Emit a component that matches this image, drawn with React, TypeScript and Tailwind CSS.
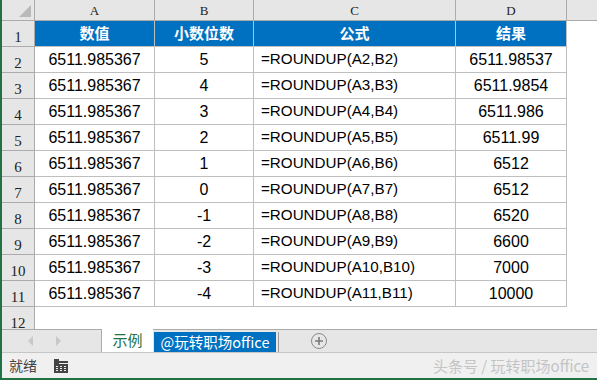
import React from "react";

const rows: [string, string, string, string][] = [
  ["6511.985367", "5", "=ROUNDUP(A2,B2)", "6511.98537"],
  ["6511.985367", "4", "=ROUNDUP(A3,B3)", "6511.9854"],
  ["6511.985367", "3", "=ROUNDUP(A4,B4)", "6511.986"],
  ["6511.985367", "2", "=ROUNDUP(A5,B5)", "6511.99"],
  ["6511.985367", "1", "=ROUNDUP(A6,B6)", "6512"],
  ["6511.985367", "0", "=ROUNDUP(A7,B7)", "6512"],
  ["6511.985367", "-1", "=ROUNDUP(A8,B8)", "6520"],
  ["6511.985367", "-2", "=ROUNDUP(A9,B9)", "6600"],
  ["6511.985367", "-3", "=ROUNDUP(A10,B10)", "7000"],
  ["6511.985367", "-4", "=ROUNDUP(A11,B11)", "10000"],
];

const serif = { fontFamily: '"Liberation Serif", "Noto Sans CJK SC", serif' };
const sans = { fontFamily: '"Liberation Sans", "Noto Sans CJK SC", sans-serif' };
const cjk = { fontFamily: '"Noto Sans CJK SC", "Liberation Sans", sans-serif' };

function RowHead({ n }: { n: number }) {
  return (
    <div
      className="w-[33px] h-full bg-[#e6e6e6] border-r border-b border-[#ababab] flex items-end justify-center pb-[1px] text-[15px] text-[#222] leading-none"
      style={serif}
    >
      {n}
    </div>
  );
}

export default function App() {
  return (
    <div className="w-[597px] h-[380px] bg-white flex flex-col overflow-hidden border-l-2 border-b-2 border-[#217346]">
      <div className="h-[329px] overflow-hidden flex flex-col">
        {/* column headers */}
        <div className="flex h-[21px] shrink-0 bg-[#e6e6e6] text-[13px] text-[#222]" style={serif}>
          <div className="w-[33px] h-full border-r border-b border-[#ababab] relative">
            <div className="absolute right-[3px] bottom-[3px] w-0 h-0 border-l-[12px] border-l-transparent border-b-[12px] border-b-[#b9b9b9]" />
          </div>
          <div className="w-[120px] h-full border-r border-b border-[#ababab] flex items-center justify-center pt-[2px]">A</div>
          <div className="w-[99px] h-full border-r border-b border-[#ababab] flex items-center justify-center pt-[2px]">B</div>
          <div className="w-[202px] h-full border-r border-b border-[#ababab] flex items-center justify-center pt-[2px]">C</div>
          <div className="w-[111px] h-full border-r border-b border-[#ababab] flex items-center justify-center pt-[2px]">D</div>
          <div className="flex-1 h-full border-b border-[#ababab]" />
        </div>
        {/* header row */}
        <div className="flex h-[26px] shrink-0">
          <RowHead n={1} />
          {[
            ["w-[120px]", "数值"],
            ["w-[99px]", "小数位数"],
            ["w-[202px]", "公式"],
            ["w-[111px]", "结果"],
          ].map(([w, t]) => (
            <div
              key={t}
              className={`${w} h-full bg-[#0070c0] border-r border-b border-[#bfbfbf] flex items-center justify-center text-white font-bold text-[15px]`}
              style={cjk}
            >
              {t}
            </div>
          ))}
          <div className="flex-1" />
        </div>
        {rows.map((r, i) => (
          <div key={i} className="flex h-[26px] shrink-0 text-[16px] text-black" style={sans}>
            <RowHead n={i + 2} />
            <div className="w-[120px] h-full border-r border-b border-[#bfbfbf] flex items-center justify-center">{r[0]}</div>
            <div className="w-[99px] h-full border-r border-b border-[#bfbfbf] flex items-center justify-center">{r[1]}</div>
            <div className="w-[202px] h-full border-r border-b border-[#bfbfbf] flex items-center pl-[7px] text-[15.2px]">{r[2]}</div>
            <div className="w-[111px] h-full border-r border-b border-[#bfbfbf] flex items-center justify-center">{r[3]}</div>
            <div className="flex-1" />
          </div>
        ))}
        <div className="flex h-[26px] shrink-0">
          <RowHead n={12} />
          <div className="flex-1" />
        </div>
      </div>
      {/* tab bar */}
      <div className="h-[23px] shrink-0 flex bg-[#e6e6e6] border-t border-[#ababab] relative">
        <div className="w-[99px] h-full flex items-center">
          <div className="ml-[26px] w-0 h-0 border-y-[5px] border-y-transparent border-r-[5px] border-r-[#c8c8c8]" />
          <div className="ml-[23px] w-0 h-0 border-y-[5px] border-y-transparent border-l-[5px] border-l-[#c8c8c8]" />
        </div>
        <div className="w-[52px] h-[23px] -mt-[1px] bg-white border-l border-[#ababab] flex flex-col">
          <div className="flex-1 flex items-center justify-center text-[15px] text-[#217346]" style={cjk}>示例</div>
          <div className="h-[2px] bg-[#217346]" />
        </div>
        <div className="w-[122px] h-[20px] mt-[2px] ml-[1px] bg-[#0070c0] text-white text-[14.5px] flex items-center justify-center" style={cjk}>
          @玩转职场office
        </div>
        <div className="w-px h-[20px] mt-[2px] ml-[2px] bg-[#9a9a9a]" />
        <div className="ml-[32px] mt-[3px] w-[16px] h-[16px] rounded-full border-[1.5px] border-[#8a8a8a] flex items-center justify-center">
          <svg width="10" height="10" viewBox="0 0 10 10">
            <path d="M5 1v8M1 5h8" stroke="#7a7a7a" strokeWidth="1.6" />
          </svg>
        </div>
      </div>
      {/* status bar */}
      <div className="flex-1 bg-[#f0f0f0] border-t border-[#c6c6c6] flex items-center relative">
        <span className="ml-[7px] text-[14px] text-[#444]" style={cjk}>就绪</span>
        <svg className="ml-[17px]" width="14" height="14" viewBox="0 0 14 14">
          <rect x="0" y="0" width="5" height="5" fill="#444" />
          <rect x="5" y="2" width="9" height="2" fill="#444" />
          <rect x="0" y="5" width="14" height="9" fill="#444" />
          <g fill="#f0f0f0">
            <rect x="2" y="7" width="2" height="1" />
            <rect x="6" y="7" width="2" height="1" />
            <rect x="10" y="7" width="2" height="1" />
            <rect x="2" y="9" width="2" height="1" />
            <rect x="6" y="9" width="2" height="1" />
            <rect x="10" y="9" width="2" height="1" />
            <rect x="2" y="11" width="2" height="1" />
            <rect x="6" y="11" width="2" height="1" />
            <rect x="10" y="11" width="2" height="1" />
          </g>
        </svg>
        <span className="absolute right-[8px] top-[2px] text-[15px] text-[#c4c4c4]" style={cjk}>
          头条号 / 玩转职场office
        </span>
      </div>
    </div>
  );
}
